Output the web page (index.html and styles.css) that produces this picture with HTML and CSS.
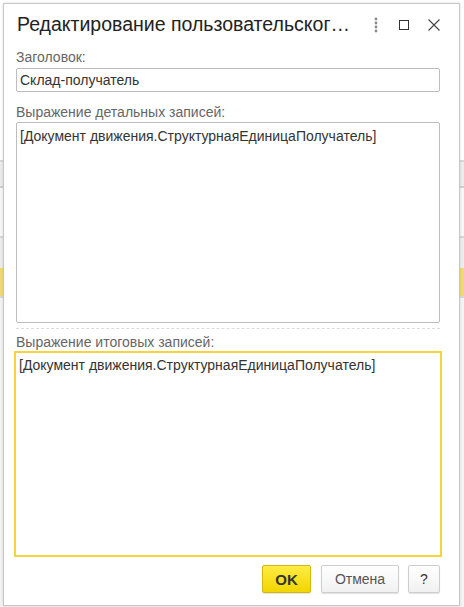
FILE: index.html
```html
<!DOCTYPE html>
<html lang="ru">
<head>
<meta charset="utf-8">
<title>Редактирование пользовательского поля</title>
<link rel="stylesheet" href="styles.css">
</head>
<body>
<div class="dialog">
  <header class="titlebar">
    <h1 class="title">Редактирование пользовательског…</h1>
    <div class="win-buttons">
      <button class="win-btn" aria-label="Ещё">
        <svg width="6" height="16" viewBox="0 0 6 16"><circle cx="3" cy="2" r="1.4" fill="#8a8a8a"/><circle cx="3" cy="6" r="1.4" fill="#8a8a8a"/><circle cx="3" cy="10" r="1.4" fill="#8a8a8a"/><circle cx="3" cy="14" r="1.4" fill="#8a8a8a"/></svg>
      </button>
      <button class="win-btn" aria-label="Развернуть">
        <svg width="12" height="12" viewBox="0 0 12 12"><rect x="1.5" y="1.5" width="9" height="9" fill="none" stroke="#333" stroke-width="1"/></svg>
      </button>
      <button class="win-btn" aria-label="Закрыть">
        <svg width="14" height="14" viewBox="0 0 14 14"><path d="M1.5 1.5 L12.5 12.5 M12.5 1.5 L1.5 12.5" stroke="#444" stroke-width="1.1" fill="none"/></svg>
      </button>
    </div>
  </header>

  <div class="form">
    <label class="label">Заголовок:</label>
    <div class="input">Склад-получатель</div>

    <label class="label label-gap">Выражение детальных записей:</label>
    <div class="area area-detail">[Документ движения.СтруктурнаяЕдиницаПолучатель]</div>

    <div class="separator"></div>

    <label class="label">Выражение итоговых записей:</label>
    <div class="area area-total">[Документ движения.СтруктурнаяЕдиницаПолучатель]</div>

    <div class="actions">
      <button class="btn btn-ok">OK</button>
      <button class="btn btn-cancel">Отмена</button>
      <button class="btn btn-help">?</button>
    </div>
  </div>
</div>
</body>
</html>
```

FILE: styles.css
```css
html, body {
  margin: 0;
  padding: 0;
}

body {
  width: 464px;
  height: 607px;
  box-sizing: border-box;
  padding: 3px 4px 1px 3px;
  font-family: "Liberation Sans", Arial, sans-serif;
  /* the form that lies underneath the dialog */
  background:
    linear-gradient(to bottom,
      #ffffff 0, #ffffff 160px,
      #d8d8d8 160px, #d8d8d8 162px,
      #ececec 162px, #ececec 186px,
      #d0d0d0 186px, #d0d0d0 188px,
      #f7f7f7 188px, #f7f7f7 236px,
      #d6d6d6 236px, #d6d6d6 238px,
      #ededed 238px, #ededed 268px,
      #f3d975 268px, #f3d975 296px,
      #d9d9d9 296px, #d9d9d9 298px,
      #f4f4f4 298px, #f4f4f4 100%);
  overflow: hidden;
}

.dialog {
  height: 100%;
  box-sizing: border-box;
  background: #fff;
  border: 1px solid #c6c6c6;
  display: flex;
  flex-direction: column;
  box-shadow: 0 0 3px rgba(0, 0, 0, 0.12);
}

.titlebar {
  height: 45px;
  display: flex;
  align-items: center;
  padding: 0 0 0 13px;
  flex: none;
}

.title {
  margin: 0;
  font-weight: normal;
  font-size: 19.5px;
  color: #222;
  flex: 1;
  white-space: nowrap;
  overflow: hidden;
  position: relative;
  top: -2px;
}

.win-buttons {
  display: flex;
  align-items: center;
  position: relative;
  top: -2px;
}

.win-btn {
  border: 0;
  background: none;
  padding: 0;
  display: flex;
  align-items: center;
  justify-content: center;
  width: 30px;
  height: 30px;
}

.win-btn:nth-child(1) { margin-right: -2px; }
.win-btn:nth-child(3) { margin-right: 10px; }

.form {
  padding: 0 19px 0 12px;
  display: flex;
  flex-direction: column;
  flex: 1;
}

.label {
  display: block;
  font-size: 14px;
  line-height: 16px;
  height: 16px;
  color: #666;
}

.input {
  margin-top: 3px;
  height: 24px;
  box-sizing: border-box;
  border: 1px solid #bdbdbd;
  border-radius: 2px;
  padding: 0 3px;
  font-size: 14px;
  line-height: 22px;
  color: #333;
}

.label-gap {
  margin-top: 12px;
}

.area {
  box-sizing: border-box;
  font-size: 14px;
  line-height: 16px;
  color: #333;
  background: #fff;
}

.area-detail {
  margin-top: 2px;
  height: 201px;
  border: 1px solid #bdbdbd;
  border-radius: 2px;
  padding: 5px 3px;
}

.separator {
  margin-top: 5px;
  margin-bottom: 5px;
  border-top: 1px dashed #dcdcdc;
}

.area-total {
  margin: 1px -2px 0;
  height: 206px;
  border: 2px solid #f6d43c;
  padding: 4px 3px;
}

.actions {
  margin-top: 8px;
  display: flex;
  justify-content: flex-end;
  gap: 9px;
}

.btn {
  height: 28px;
  box-sizing: border-box;
  border-radius: 2px;
  font-family: inherit;
  font-size: 14px;
  padding: 0;
  color: #444;
  border: 1px solid #cdcdcd;
  background: linear-gradient(to bottom, #ffffff, #f1f1f1);
  box-shadow: 0 1px 1px rgba(0, 0, 0, 0.12);
}

.btn-ok {
  width: 49px;
  margin-right: 1px;
  font-weight: bold;
  font-size: 15px;
  color: #333;
  border-color: #d2b80c;
  background: linear-gradient(to bottom, #ffec45, #f2d500);
}

.btn-cancel {
  width: 78px;
  color: #555;
}

.btn-help {
  width: 32px;
  color: #333;
}
```
